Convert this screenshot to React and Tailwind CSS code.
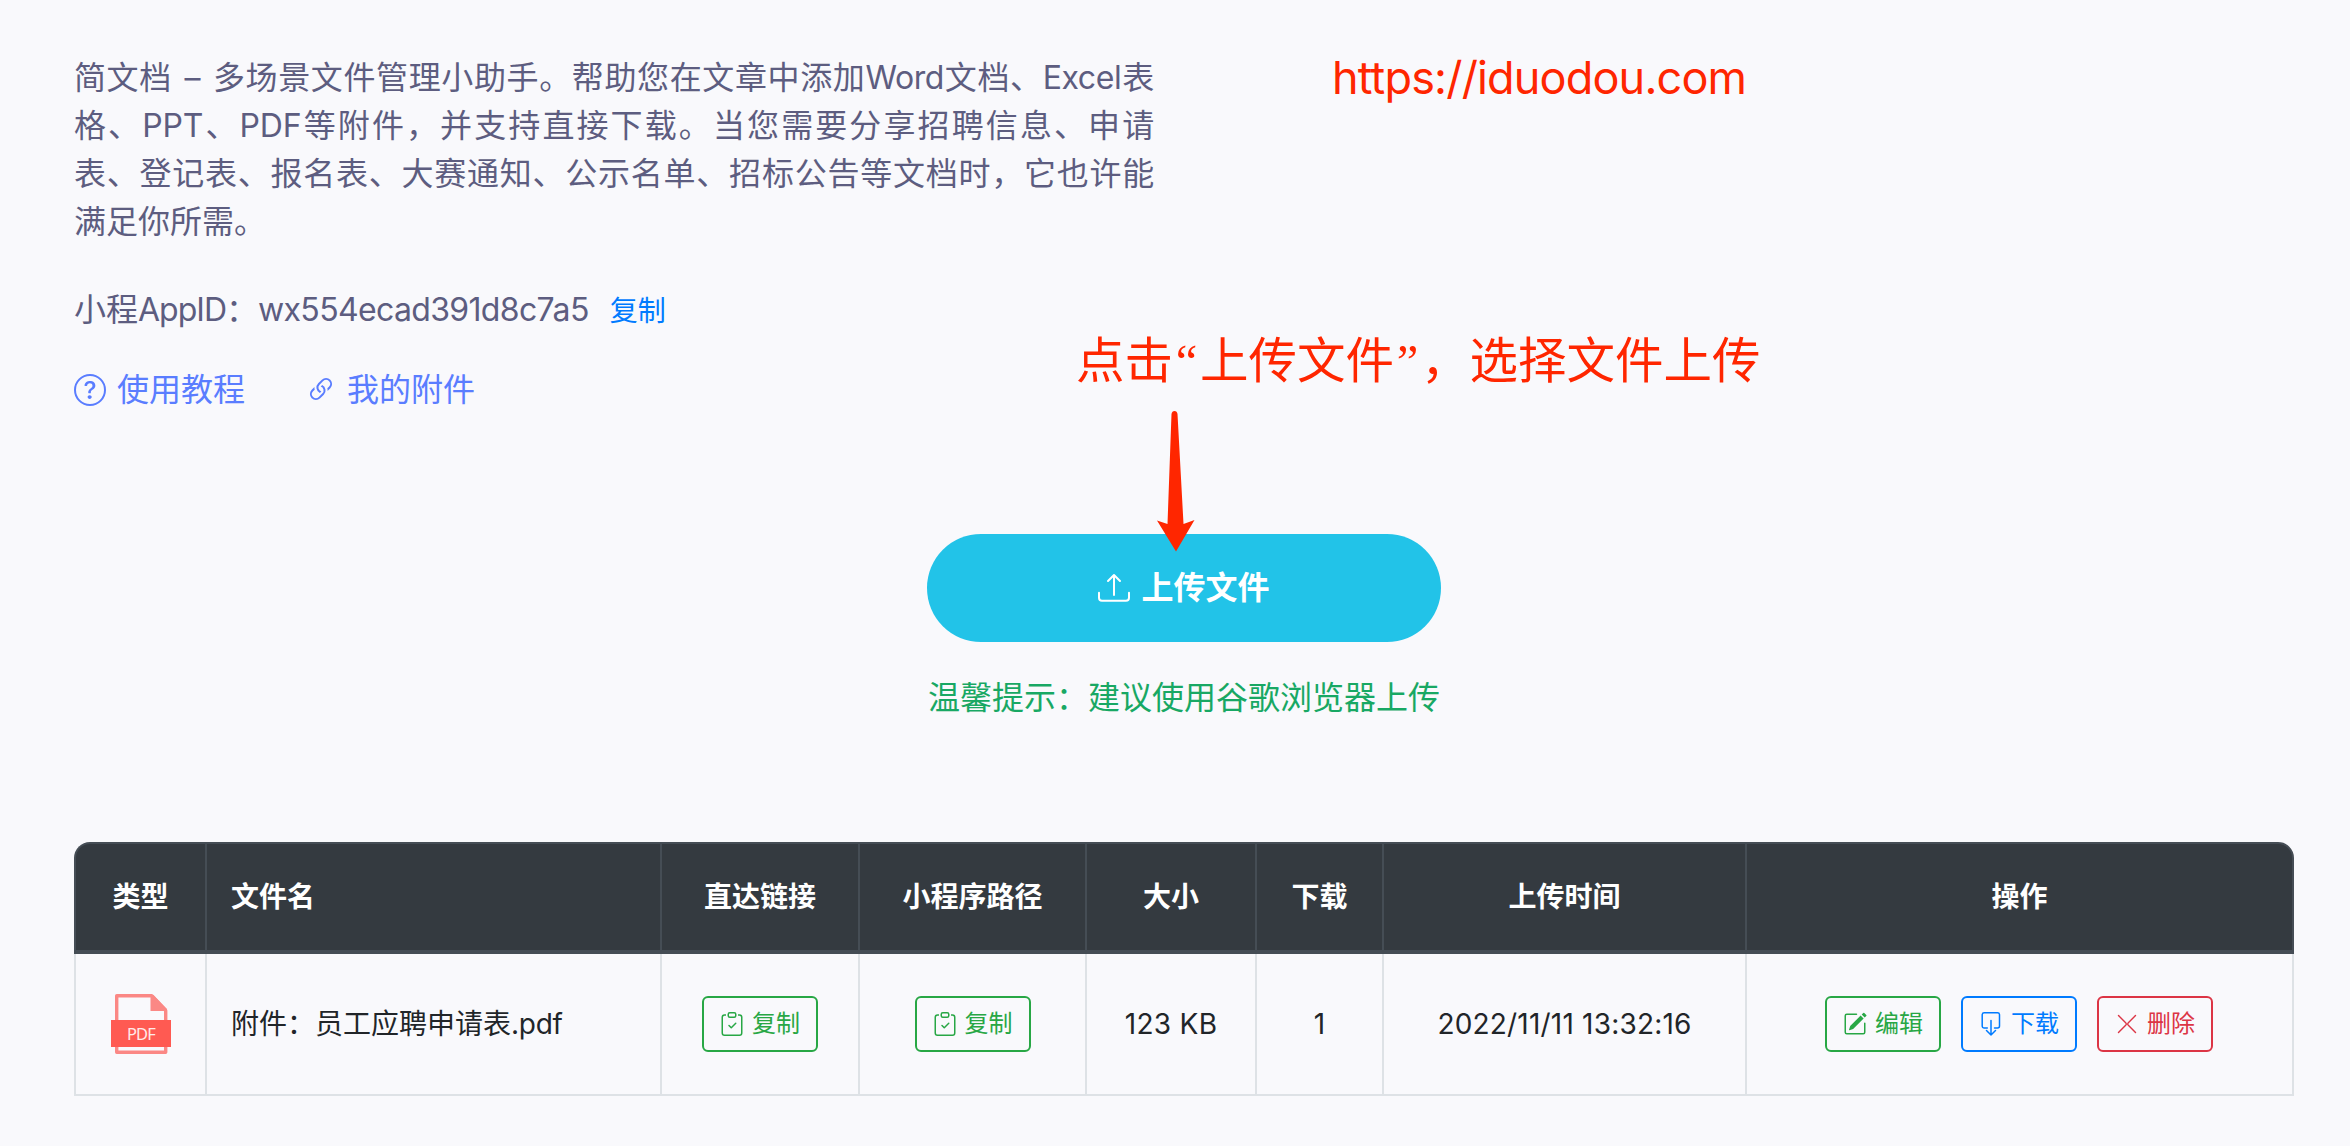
import {
  BsQuestionCircle,
  BsLink45Deg,
  BsUpload,
  BsClipboardCheck,
  BsPencilSquare,
} from 'react-icons/bs';

const INTRO = [
  '格、PPT、PDF等附件，并支持直接下载。当您需要分享招聘信息、申请',
  '表、登记表、报名表、大赛通知、公示名单、招标公告等文档时，它也许能',
];

const HEADERS = ['类型', '文件名', '直达链接', '小程序路径', '大小', '下载', '上传时间', '操作'];

function PdfIcon() {
  return (
    <svg className="block w-[60px] h-[60px] mx-auto" viewBox="0 0 60 60" fill="none">
      <path d="M5.7 58.3V1.7h35l14 15v41.6z" stroke="#fb8885" strokeWidth="3.4" strokeLinejoin="round" />
      <path d="M39.5 1h3l13.5 14v2H39.5z" fill="#fb8885" />
      <rect y="26" width="60" height="27" fill="#ff5a52" />
      <text x="30" y="45.5" textAnchor="middle" fontSize="16.5" fontFamily="Noto Sans, sans-serif" letterSpacing="-0.8" fill="#ffe9e8">PDF</text>
    </svg>
  );
}

function DownloadIcon() {
  return (
    <svg className="w-6 h-6" viewBox="0 0 24 24" fill="none" stroke="currentColor" strokeWidth="1.5" strokeLinecap="round" strokeLinejoin="round">
      <path d="M8.3 16H5.2A2 2 0 0 1 3.2 14V2.5A2 2 0 0 1 5.2 .8H18.5A2 2 0 0 1 20.5 2.5V14A2 2 0 0 1 18.5 16H15.5" />
      <path d="M12 8.5V23M7.5 18.5 12 23l4.5-4.5" />
    </svg>
  );
}

function CloseIcon() {
  return (
    <svg className="w-6 h-6" viewBox="0 0 24 24" fill="none" stroke="currentColor" strokeWidth="1.4" strokeLinecap="round">
      <path d="M3.5 3.5l7.4 7.6q.8.9 0 1.8l-7.4 7.6M20.500 3.5l-7.4 7.6q-.8.9 0 1.8l7.4 7.6" />
    </svg>
  );
}

function ActionButton({ icon, color, children }) {
  return (
    <button
      type="button"
      className={`inline-flex items-center justify-center gap-2 w-[116px] h-14 border-2 rounded-md text-2xl ${color}`}
    >
      {icon}
      <span>{children}</span>
    </button>
  );
}

function Quote({ children }) {
  return (
    <span className="inline-block w-[27px] text-center font-['Liberation_Serif',serif] leading-none">{children}</span>
  );
}

function Arrow() {
  return (
    <svg className="absolute left-[1156px] top-[411px] w-10 h-[141px]" viewBox="0 0 40 141" fill="#ff2600">
      <path d="M15.5 3Q16 0 18.5 0T21.5 3L27.5 113 38.5 109 20 140.5 1 109.5 11.5 113z" />
    </svg>
  );
}

export default function App() {
  return (
    <div className="relative w-[2350px] h-[1146px] overflow-hidden bg-[#f9f9fc] pl-[74px] pr-14 pt-[54px] font-['Inter','Noto_Sans_CJK_SC',sans-serif] text-[#212529]">
      {/* 介绍 */}
      <div className="w-[1080px] text-[32px] leading-[48px] text-[#5d5d80]">
        <p className="whitespace-nowrap text-justify [text-align-last:justify] tracking-[-0.2px]">
          简文档 <span className="mx-[3px]">–</span> 多场景文件管理小助手。帮助您在文章中添加<span className="tracking-[-0.4px]">Word</span>文档、<span className="tracking-[-0.4px]">Excel</span>表
        </p>
        {INTRO.map((line) => (
          <p key={line} className="whitespace-nowrap text-justify [text-align-last:justify] tracking-[-0.2px]">{line}</p>
        ))}
        <p>满足你所需。</p>
      </div>

      <div className="flex items-center mt-10 h-12 text-[32px] leading-[48px] text-[#5d5d80]">
        <span>小程<span className="tracking-[-1px]">AppID</span>：<span className="tracking-[-0.65px]">wx554ecad391d8c7a5</span></span>
        <a className="ml-[21px] pt-0.5 text-[28px] text-[#007bff]">复制</a>
      </div>

      <div className="flex items-center mt-8 h-12 text-[32px] leading-[48px] text-[#5a7dff]">
        <BsQuestionCircle className="w-8 h-8" />
        <a className="ml-[11px]">使用教程</a>
        <BsLink45Deg className="ml-[60px] w-8 h-8" />
        <a className="ml-2.5">我的附件</a>
      </div>

      {/* 上传 */}
      <div className="flex flex-col items-center mt-[120px]">
        <button
          type="button"
          className="flex items-center justify-center gap-[11px] w-[514px] h-[108px] rounded-full bg-[#22c3e8] text-white text-[32px] font-bold"
        >
          <BsUpload className="w-8 h-8" />
          <span>上传文件</span>
        </button>
        <p className="mt-8 h-12 text-[32px] leading-[48px] text-[#18a864]">温馨提示：建议使用谷歌浏览器上传</p>
      </div>

      {/* 文件列表 */}
      <table className="table-fixed w-[2220px] mt-[120px] border-separate border-spacing-0 text-center text-[28px]">
        <colgroup>
          <col className="w-[131px]" />
          <col className="w-[455px]" />
          <col className="w-[198px]" />
          <col className="w-[227px]" />
          <col className="w-[170px]" />
          <col className="w-[127px]" />
          <col className="w-[363px]" />
          <col className="w-[549px]" />
        </colgroup>
        <thead>
          <tr className="h-[112px]">
            {HEADERS.map((title) => (
              <th
                key={title}
                className="p-0 bg-[#343a40] text-white font-bold border-t-2 border-b-4 border-l-2 border-[#454d55] last:border-r-2 first:rounded-tl-2xl last:rounded-tr-2xl nth-2:text-left nth-2:pl-6"
              >
                {title}
              </th>
            ))}
          </tr>
        </thead>
        <tbody>
          <tr className="h-[142px] *:p-0 *:border-l-2 *:border-b-2 *:border-[#dee2e6] *:last:border-r-2">
            <td><PdfIcon /></td>
            <td className="text-left"><span className="pl-6">附件：员工应聘申请表<span className="tracking-[-0.3px]">.pdf</span></span></td>
            <td>
              <ActionButton color="border-[#28a745] text-[#28a745]" icon={<BsClipboardCheck className="w-6 h-6" />}>复制</ActionButton>
            </td>
            <td>
              <ActionButton color="border-[#28a745] text-[#28a745]" icon={<BsClipboardCheck className="w-6 h-6" />}>复制</ActionButton>
            </td>
            <td className="tracking-[0.3px]">123 KB</td>
            <td>1</td>
            <td className="tracking-[0.2px]">2022/11/11 13:32:16</td>
            <td>
              <div className="flex justify-center gap-5 mr-px">
                <ActionButton color="border-[#28a745] text-[#28a745]" icon={<BsPencilSquare className="w-6 h-6" />}>编辑</ActionButton>
                <ActionButton color="border-[#007bff] text-[#007bff]" icon={<DownloadIcon />}>下载</ActionButton>
                <ActionButton color="border-[#dc3545] text-[#dc3545]" icon={<CloseIcon />}>删除</ActionButton>
              </div>
            </td>
          </tr>
        </tbody>
      </table>

      {/* 标注 */}
      <p className="absolute left-[1332px] top-[48px] text-[45px] leading-[60px] tracking-[-0.83px] text-[#ff2600] whitespace-nowrap">https://iduodou.com</p>
      <p className="absolute left-[1076px] top-[325px] text-[48.5px] leading-[72px] text-[#ff2600] whitespace-nowrap">
        点击<Quote>“</Quote>上传文件<Quote>”</Quote>，选择文件上传
      </p>
      <Arrow />
    </div>
  );
}
